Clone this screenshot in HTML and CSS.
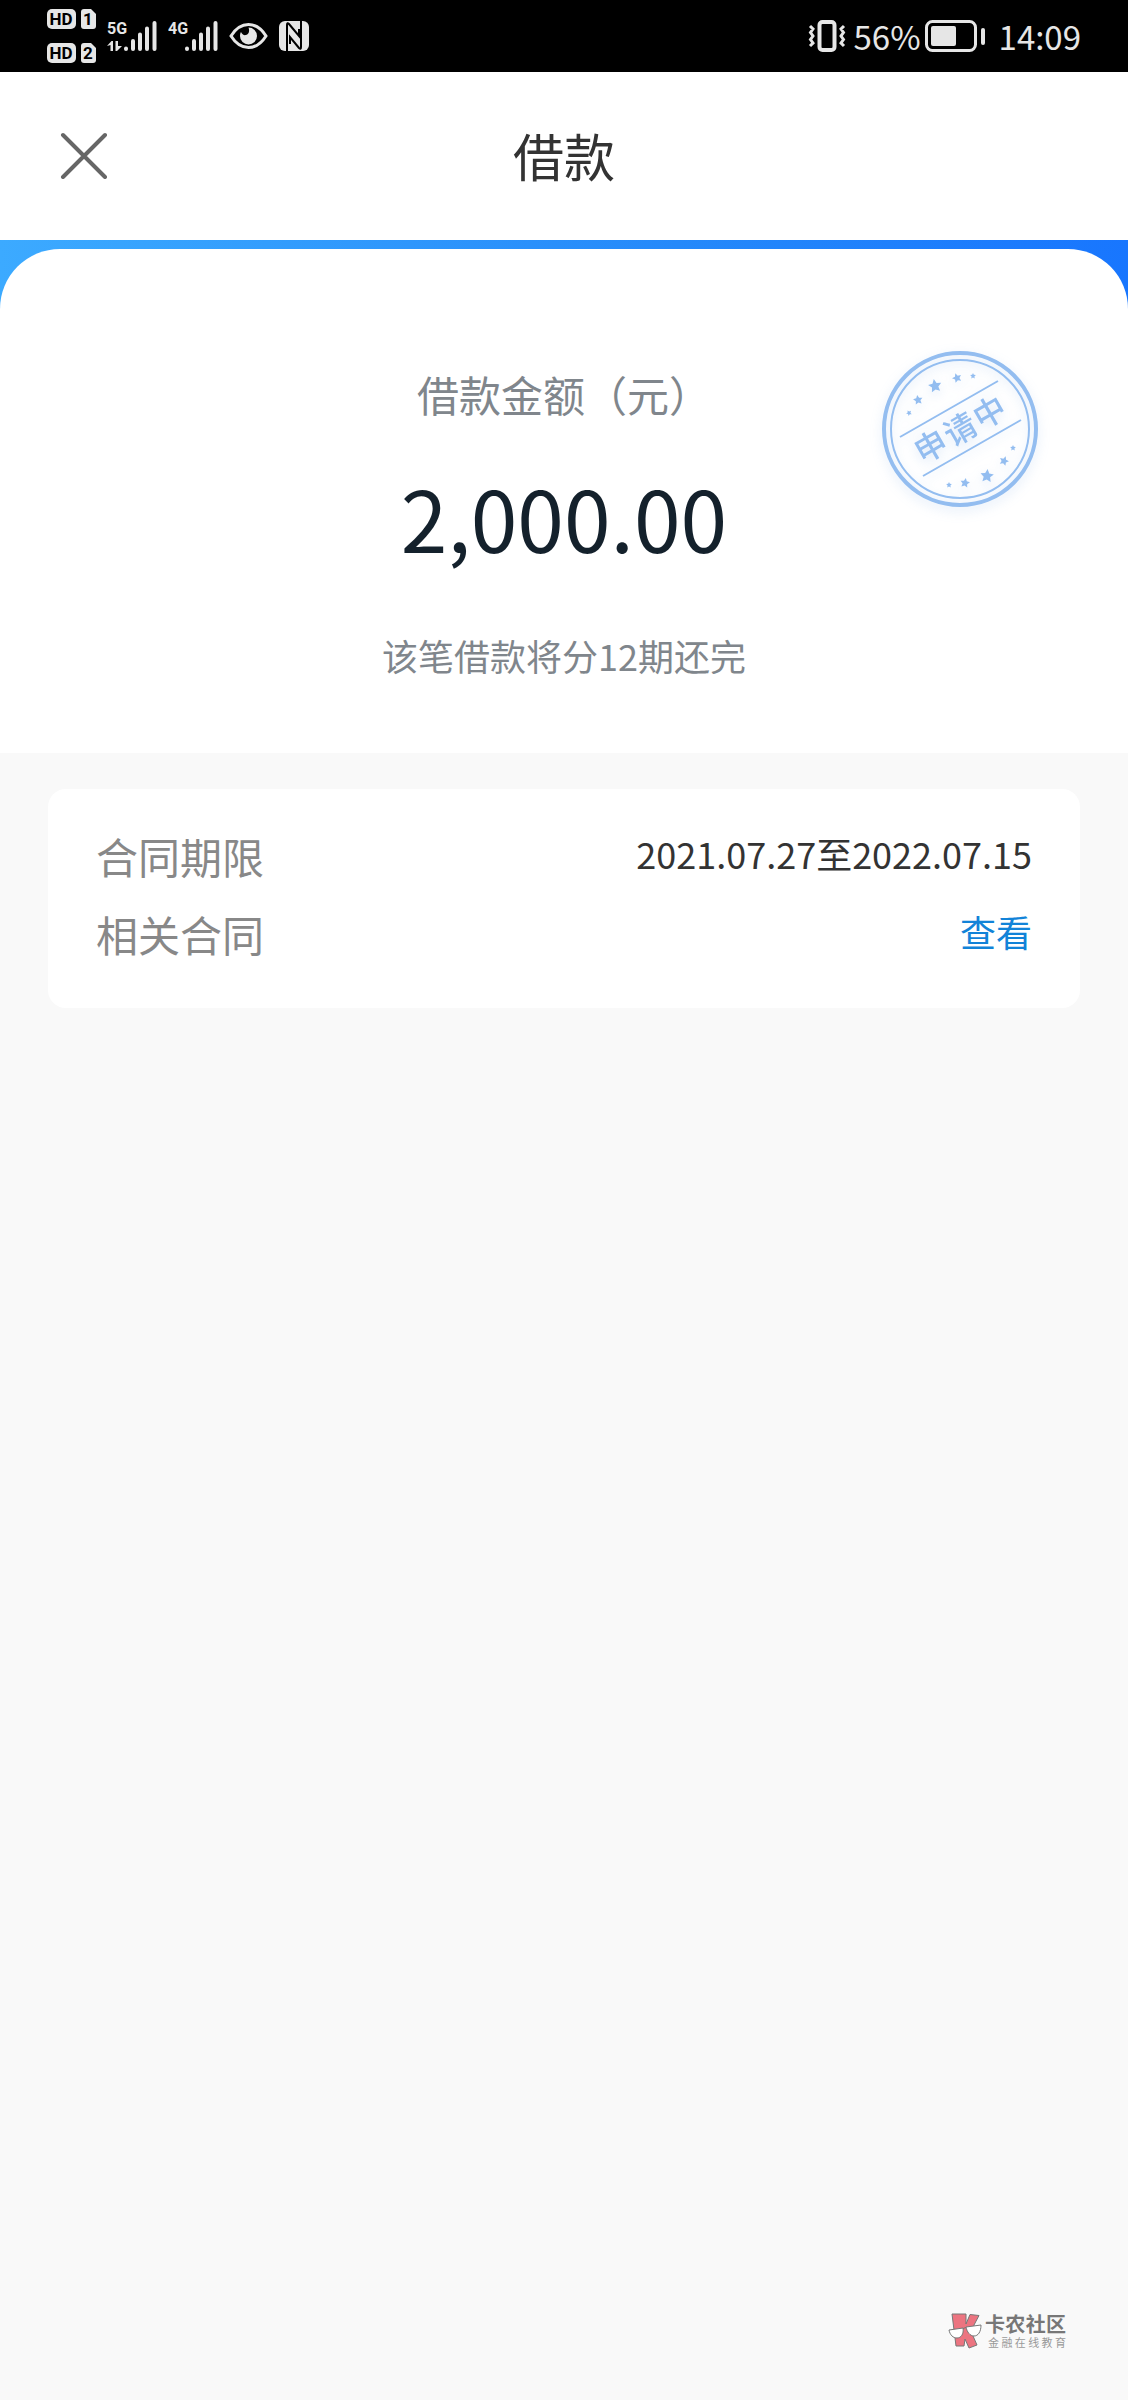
FILE: index.html
```html
<!DOCTYPE html>
<html lang="zh-CN">
<head>
<meta charset="utf-8">
<meta name="viewport" content="width=device-width, initial-scale=1">
<title>借款</title>
<link rel="stylesheet" href="styles.css">
</head>
<body>
<div class="status-bar">
  <div class="status-left">
    <svg class="icon-sim" viewBox="0 -4 49 64" aria-hidden="true">
      <rect x="0" y="1" width="29" height="20" rx="5"/>
      <text class="sim-text" x="14" y="17">HD</text>
      <path d="M37 1h7l5 5v12a3 3 0 0 1-3 3h-9a3 3 0 0 1-3-3V4a3 3 0 0 1 3-3z"/>
      <text class="sim-text" x="41" y="17">1</text>
      <rect x="0" y="35" width="29" height="20" rx="5"/>
      <text class="sim-text" x="14" y="51">HD</text>
      <path d="M37 35h7l5 5v12a3 3 0 0 1-3 3h-9a3 3 0 0 1-3-3V38a3 3 0 0 1 3-3z"/>
      <text class="sim-text" x="41" y="51">2</text>
    </svg>
    <svg class="icon-signal" viewBox="0 -6 50 44" aria-hidden="true">
      <text class="net-text" x="0" y="14">5G</text>
      <path class="bars" d="M19 28.500v.5M26 21v8M33 14.500V29M40 8.500V29M47.500 3v26"/>
      <path d="M0 26l4.500-5H6v10H3.500v-6zM8.500 21H11v5h4l-5 5H8.500z"/>
    </svg>
    <svg class="icon-signal" viewBox="0 -6 50 44" aria-hidden="true">
      <text class="net-text" x="0" y="14">4G</text>
      <path class="bars" d="M19 28.500v.5M26 21v8M33 14.500V29M40 8.500V29M47.500 3v26"/>
    </svg>
    <svg class="icon-eye" viewBox="0 0 39 28" aria-hidden="true">
      <path class="eye-line" d="M2 14C7 6 13 2.500 19.500 2.500S32 6 37 14c-5 8-11 11.500-17.500 11.500S7 22 2 14z"/>
      <path d="M19.500 5.500a8.500 8.500 0 1 1-8.500 8.500c0-1.500.4-3 1-4 1 2.500 3 3.500 5 3 2.500-.7 4-3.500 2.500-7.500z"/>
    </svg>
    <svg class="icon-nfc" viewBox="0 0 30 30" aria-hidden="true">
      <rect width="30" height="30" rx="6"/>
      <path class="nfc-cut" d="M8 30V4q0-3 2-1l10 12V8M22 0v26q0 3-2 1L11 16v7"/>
    </svg>
  </div>
  <div class="status-right">
    <svg class="icon-vibrate" viewBox="0 0 38 32" aria-hidden="true">
      <rect class="line" x="11.500" y="2" width="15" height="28" rx="3"/>
      <path class="wave" d="M2 6l3 3-2.500 3.500L5 16l-2.500 3.500L5 23l-3 3M36 6l-3 3 2.500 3.500L33 16l2.500 3.500L33 23l3 3"/>
    </svg>
    <span class="battery-level">56%</span>
    <svg class="icon-battery" viewBox="0 0 61 32" aria-hidden="true">
      <rect class="battery-shell" x="1.500" y="1.500" width="49" height="29" rx="6"/>
      <rect x="6" y="6" width="25" height="20" rx="2"/>
      <rect x="56" y="8" width="4" height="17" rx="2"/>
    </svg>
    <span class="clock">14:09</span>
  </div>
</div>

<header class="title-bar">
  <button class="close" type="button" aria-label="关闭">
    <svg class="icon-close" viewBox="0 0 48 48" aria-hidden="true"><path d="M3 4l42 42M45 4L3 46"/></svg>
  </button>
  <h1 class="title">借款</h1>
</header>

<main class="content">
  <div class="hero">
    <section class="summary">
      <p class="summary-label">借款金额（元）</p>
      <p class="summary-amount">2,000.00</p>
      <p class="summary-note">该笔借款将分12期还完</p>
      <svg class="stamp" viewBox="-100 -100 200 200" role="img" aria-label="申请中">
        <defs>
          <path id="star" d="M0-10l2.900 6.100 6.600.8-4.900 4.600 1.300 6.600L0 4.900l-5.900 3.200 1.300-6.600-4.900-4.600 6.600-.8z"/>
        </defs>
        <circle class="stamp-outer" r="76"/>
        <circle class="stamp-inner" r="69"/>
        <path class="stamp-line" d="M-60 8L38-48M-37 47L61-9"/>
        <g class="stamp-fill">
          <text class="stamp-text" transform="rotate(-30)" x="-34 0 34" y="12">申请中</text>
          <use href="#star" transform="translate(-51 -16) rotate(-30) scale(.3)"/>
          <use href="#star" transform="translate(-42 -29) rotate(-10) scale(.5)"/>
          <use href="#star" transform="translate(-25 -43) rotate(-10) scale(.7)"/>
          <use href="#star" transform="translate(-3 -51) rotate(-20) scale(.5)"/>
          <use href="#star" transform="translate(13 -53) scale(.3)"/>
          <use href="#star" transform="translate(-11 56) scale(.3)"/>
          <use href="#star" transform="translate(5 54) rotate(10) scale(.5)"/>
          <use href="#star" transform="translate(27 47) rotate(5) scale(.7)"/>
          <use href="#star" transform="translate(44 32) rotate(20) scale(.5)"/>
          <use href="#star" transform="translate(53 19) scale(.3)"/>
        </g>
      </svg>
    </section>
  </div>

  <dl class="card">
    <div class="row">
      <dt class="row-label">合同期限</dt>
      <dd class="row-value">2021.07.27至2022.07.15</dd>
    </div>
    <div class="row">
      <dt class="row-label">相关合同</dt>
      <dd class="row-value"><a class="link" href="#contract">查看</a></dd>
    </div>
  </dl>
</main>

<footer class="brand">
  <svg class="brand-logo" viewBox="0 0 34 36" aria-hidden="true">
    <path class="brand-k" d="M4 1h14v10l4-9.500 9 1L26 12l-1 11 4 9-8 3-4-9-1 7H8z"/>
    <path class="brand-glass" d="M1 17l14-2c1 6-2 10-6 10s-7-3-8-8zM18 14l15-2c0 7-3 11-7 11s-7-4-8-9z"/>
    <path class="brand-bridge" d="M15 15.500l3-1"/>
  </svg>
  <div class="brand-text">
    <div class="brand-name">卡农社区</div>
    <div class="brand-sub">金融在线教育</div>
  </div>
</footer>
</body>
</html>
```
FILE: styles.css
```css
* {
  box-sizing: border-box;
}

body {
  margin: 0;
  min-height: 100vh;
  display: flex;
  flex-direction: column;
  background: #f9f9f9;
  color: #333;
  font-family: "Noto Sans CJK SC", "Noto Sans", sans-serif;
}

h1, p, dl, dd {
  margin: 0;
}

svg {
  display: block;
  flex: none;
}

/* Status bar */
.status-bar {
  display: flex;
  justify-content: space-between;
  height: 72px;
  padding: 0 47px;
  background: #000;
  color: #e6e6e6;
  font-size: 33px;
  line-height: 72px;
}

.status-bar svg {
  fill: #e6e6e6;
}

.status-left,
.status-right {
  display: flex;
  align-items: center;
}

.status-left {
  gap: 11px;
}

.icon-sim {
  width: 49px;
  height: 64px;
}

.icon-signal {
  width: 50px;
  height: 44px;
}

.icon-eye {
  width: 39px;
  height: 28px;
}

.icon-nfc {
  width: 30px;
  height: 30px;
}

.icon-vibrate {
  width: 38px;
  height: 32px;
  margin-right: 8px;
}

.icon-battery {
  width: 61px;
  height: 32px;
  margin: 0 13px 0 4px;
}

.sim-text {
  fill: #000;
  font: 700 17px "Liberation Sans Narrow", Roboto, sans-serif;
  text-anchor: middle;
}

.net-text {
  font: 700 16px "Liberation Sans Narrow", Roboto, sans-serif;
}

.bars {
  fill: none;
  stroke: #e6e6e6;
  stroke-width: 4;
  stroke-linecap: round;
}

.eye-line,
.line,
.wave,
.battery-shell {
  fill: none;
  stroke: #e6e6e6;
  stroke-width: 3;
}

.line {
  stroke-width: 4;
}

.nfc-cut {
  fill: none;
  stroke: #000;
  stroke-width: 2;
}

/* Title bar */
.title-bar {
  display: grid;
  grid-template-columns: 1fr auto 1fr;
  align-items: center;
  height: 168px;
  padding: 0 60px 2px;
  background: #fff;
}

.close {
  justify-self: start;
  padding: 0;
  border: 0;
  background: none;
}

.icon-close {
  width: 48px;
  height: 48px;
  fill: none;
  stroke: #666;
  stroke-width: 4;
  stroke-linecap: round;
}

.title {
  color: #333;
  font-size: 51px;
  font-weight: 400;
  line-height: 72px;
}

/* Loan summary */
.hero {
  padding-top: 9px;
  background: linear-gradient(90deg, #3caaff, #2589fa 60%, #1876fe);
}

.summary {
  position: relative;
  padding: 115px 48px 68px;
  border-radius: 60px 60px 0 0;
  background: #fff;
  text-align: center;
}

.summary-label {
  color: #80868c;
  font-size: 42px;
  line-height: 60px;
}

.summary-amount {
  margin: 33px 0 48px;
  color: #14212c;
  font-size: 84px;
  line-height: 120px;
}

.summary-note {
  color: #80868c;
  font-size: 36px;
  line-height: 60px;
}

.stamp {
  position: absolute;
  top: 80px;
  right: 68px;
  width: 200px;
  height: 200px;
  filter: drop-shadow(0 4px 6px rgb(80 140 220 / 20%));
}

.stamp-outer,
.stamp-inner,
.stamp-line {
  fill: none;
  stroke: #93bdf0;
  stroke-width: 2;
}

.stamp-outer {
  stroke-width: 4;
}

.stamp-fill {
  fill: #93bdf0;
}

.stamp-text {
  font: 500 32px "Noto Sans CJK SC", sans-serif;
  text-anchor: middle;
}

/* Contract details */
.card {
  margin: 36px 48px;
  padding: 28px 48px 35px;
  border-radius: 18px;
  background: #fff;
}

.row {
  display: flex;
  justify-content: space-between;
  height: 78px;
}

.row-label {
  color: #888;
  font-size: 42px;
  line-height: 78px;
}

.row-value {
  font-size: 36px;
  line-height: 72px;
}

.link {
  color: #1283d8;
  text-decoration: none;
}

/* Brand mark */
.brand {
  display: flex;
  align-items: center;
  gap: 3px;
  margin-top: auto;
  margin-left: auto;
  padding: 0 62px 51px 0;
}

.brand-logo {
  width: 34px;
  height: 36px;
  stroke: #777;
}

.brand-k {
  fill: #ec7480;
}

.brand-glass {
  fill: #fff;
}

.brand-bridge {
  fill: none;
}

.brand-text {
  width: 81px;
  text-align-last: justify;
}

.brand-name {
  color: #777;
  font-size: 20px;
  font-weight: 700;
  line-height: 22px;
}

.brand-sub {
  padding-left: 3px;
  color: #999;
  font-size: 11px;
  line-height: 14px;
}
```
